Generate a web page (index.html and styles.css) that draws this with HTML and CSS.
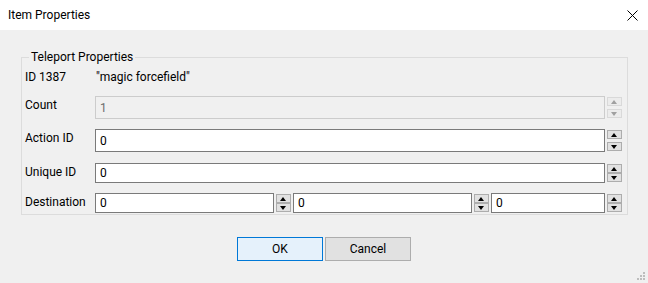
FILE: index.html
```html
<!DOCTYPE html>
<html lang="en">
<head>
  <meta charset="UTF-8" />
  <title>Item Properties</title>
  <link rel="stylesheet" href="styles.css">
</head>
<body>
  <div class="dialog">
    <div class="titlebar">
      <span class="title">Item Properties</span>
      <svg class="close" width="11" height="11" viewBox="0 0 11 11">
        <path d="M0.5 0.5 L10.5 10.5 M10.5 0.5 L0.5 10.5" stroke="#000" stroke-width="1" fill="none"/>
      </svg>
    </div>

    <div class="content">
      <fieldset class="group">
        <legend>Teleport Properties</legend>
        <div class="info">
          <span class="info-id">ID 1387</span>
          <span class="info-name">"magic forcefield"</span>
        </div>

        <div class="row row-tall">
          <label>Count</label>
          <div class="spin disabled">
            <input type="text" value="1" disabled>
            <div class="spin-btns">
              <button class="up"></button>
              <button class="down"></button>
            </div>
          </div>
        </div>

        <div class="row row-tall">
          <label>Action ID</label>
          <div class="spin">
            <input type="text" value="0">
            <div class="spin-btns">
              <button class="up"></button>
              <button class="down"></button>
            </div>
          </div>
        </div>

        <div class="row">
          <label>Unique ID</label>
          <div class="spin">
            <input type="text" value="0">
            <div class="spin-btns">
              <button class="up"></button>
              <button class="down"></button>
            </div>
          </div>
        </div>

        <div class="row row-dest">
          <label>Destination</label>
          <div class="dest">
            <div class="spin">
              <input type="text" value="0">
              <div class="spin-btns">
                <button class="up"></button>
                <button class="down"></button>
              </div>
            </div>
            <div class="spin">
              <input type="text" value="0">
              <div class="spin-btns">
                <button class="up"></button>
                <button class="down"></button>
              </div>
            </div>
            <div class="spin">
              <input type="text" value="0">
              <div class="spin-btns">
                <button class="up"></button>
                <button class="down"></button>
              </div>
            </div>
          </div>
        </div>
      </fieldset>

      <div class="buttons">
        <button class="btn btn-default">OK</button>
        <button class="btn">Cancel</button>
      </div>
    </div>

    <svg class="grip" width="9" height="9" viewBox="0 0 9 9">
      <rect x="7" y="1" width="2" height="2" fill="#bdbdbd"/>
      <rect x="4" y="4" width="2" height="2" fill="#bdbdbd"/>
      <rect x="7" y="4" width="2" height="2" fill="#bdbdbd"/>
      <rect x="1" y="7" width="2" height="2" fill="#bdbdbd"/>
      <rect x="4" y="7" width="2" height="2" fill="#bdbdbd"/>
      <rect x="7" y="7" width="2" height="2" fill="#bdbdbd"/>
    </svg>
  </div>
</body>
</html>
```

FILE: styles.css
```css
* {
  box-sizing: border-box;
}
body {
  margin: 0;
  font-family: Roboto, "Noto Sans", sans-serif;
  font-size: 12px;
  color: #000;
  background: #f0f0f0;
}
.dialog {
  position: relative;
  width: 648px;
  height: 283px;
  background: #f0f0f0;
}
.titlebar {
  height: 30px;
  background: #fff;
  display: flex;
  align-items: center;
  justify-content: space-between;
  padding: 0 10px 0 8px;
}
.title {
  line-height: 16px;
}
.close {
  display: block;
}
.content {
  padding: 19px 20px 0 21px;
}
.group {
  margin: 0;
  min-width: 0;
  padding: 0 5px 0 3px;
  height: 166px;
  border: 1px solid #dcdcdc;
}
.group legend {
  padding: 0 2px;
  margin-left: 4px;
  line-height: 16px;
}
.info {
  display: flex;
  height: 16px;
  line-height: 16px;
  margin-top: 4px;
}
.info-id {
  width: 71px;
}
.row {
  display: flex;
  align-items: flex-start;
  margin-top: 11px;
}
.row label {
  width: 70px;
  flex: none;
  line-height: 16px;
  padding-top: 1px;
}
.row .spin {
  flex: 1;
  min-width: 0;
}
.spin {
  display: flex;
  align-items: stretch;
  height: 20px;
}
.row-tall .spin {
  height: 23px;
}
.row-tall + .row-tall {
  margin-top: 10px;
}
.row-dest {
  margin-top: 10px;
}
.spin input {
  flex: 1;
  width: 0;
  min-width: 0;
  border: 1px solid #7a7a7a;
  background: #fff;
  font: inherit;
  padding: 0 4px;
  color: #000;
  outline: none;
}
.spin.disabled input {
  border-color: #cccccc;
  background: #f0f0f0;
  color: #6d6d6d;
}
.spin-btns {
  width: 15px;
  margin-left: 2px;
  display: flex;
  flex-direction: column;
  justify-content: space-between;
  flex: none;
  padding: 1px 0;
}
.spin-btns button {
  height: 9px;
  padding: 0;
  border: 1px solid #adadad;
  background: #e1e1e1;
  position: relative;
}
.spin-btns button::after {
  content: "";
  position: absolute;
  left: 3px;
  border-left: 3.5px solid transparent;
  border-right: 3.5px solid transparent;
}
.spin-btns .up::after {
  top: 2px;
  border-bottom: 4px solid #000;
}
.spin-btns .down::after {
  top: 2px;
  border-top: 4px solid #000;
}
.spin.disabled .spin-btns button {
  border-color: #d9d9d9;
  background: #ececec;
}
.spin.disabled .spin-btns .up::after {
  border-bottom-color: #a0a0a0;
}
.spin.disabled .spin-btns .down::after {
  border-top-color: #a0a0a0;
}
.dest {
  flex: 1;
  min-width: 0;
  display: flex;
  gap: 2px;
}
.dest .spin:nth-child(1),
.dest .spin:nth-child(2) {
  width: 196px;
  flex: none;
}
.dest .spin:nth-child(3) {
  flex: 1;
}
.buttons {
  display: flex;
  justify-content: center;
  gap: 2px;
  margin-top: 22px;
  margin-left: -1px;
}
.btn {
  width: 86px;
  height: 24px;
  font: inherit;
  color: #000;
  border: 1px solid #adadad;
  background: #e1e1e1;
  padding: 0;
}
.btn-default {
  border-color: #0078d7;
  background: #e5f1fb;
}
.grip {
  position: absolute;
  right: 3px;
  bottom: 3px;
}
```
